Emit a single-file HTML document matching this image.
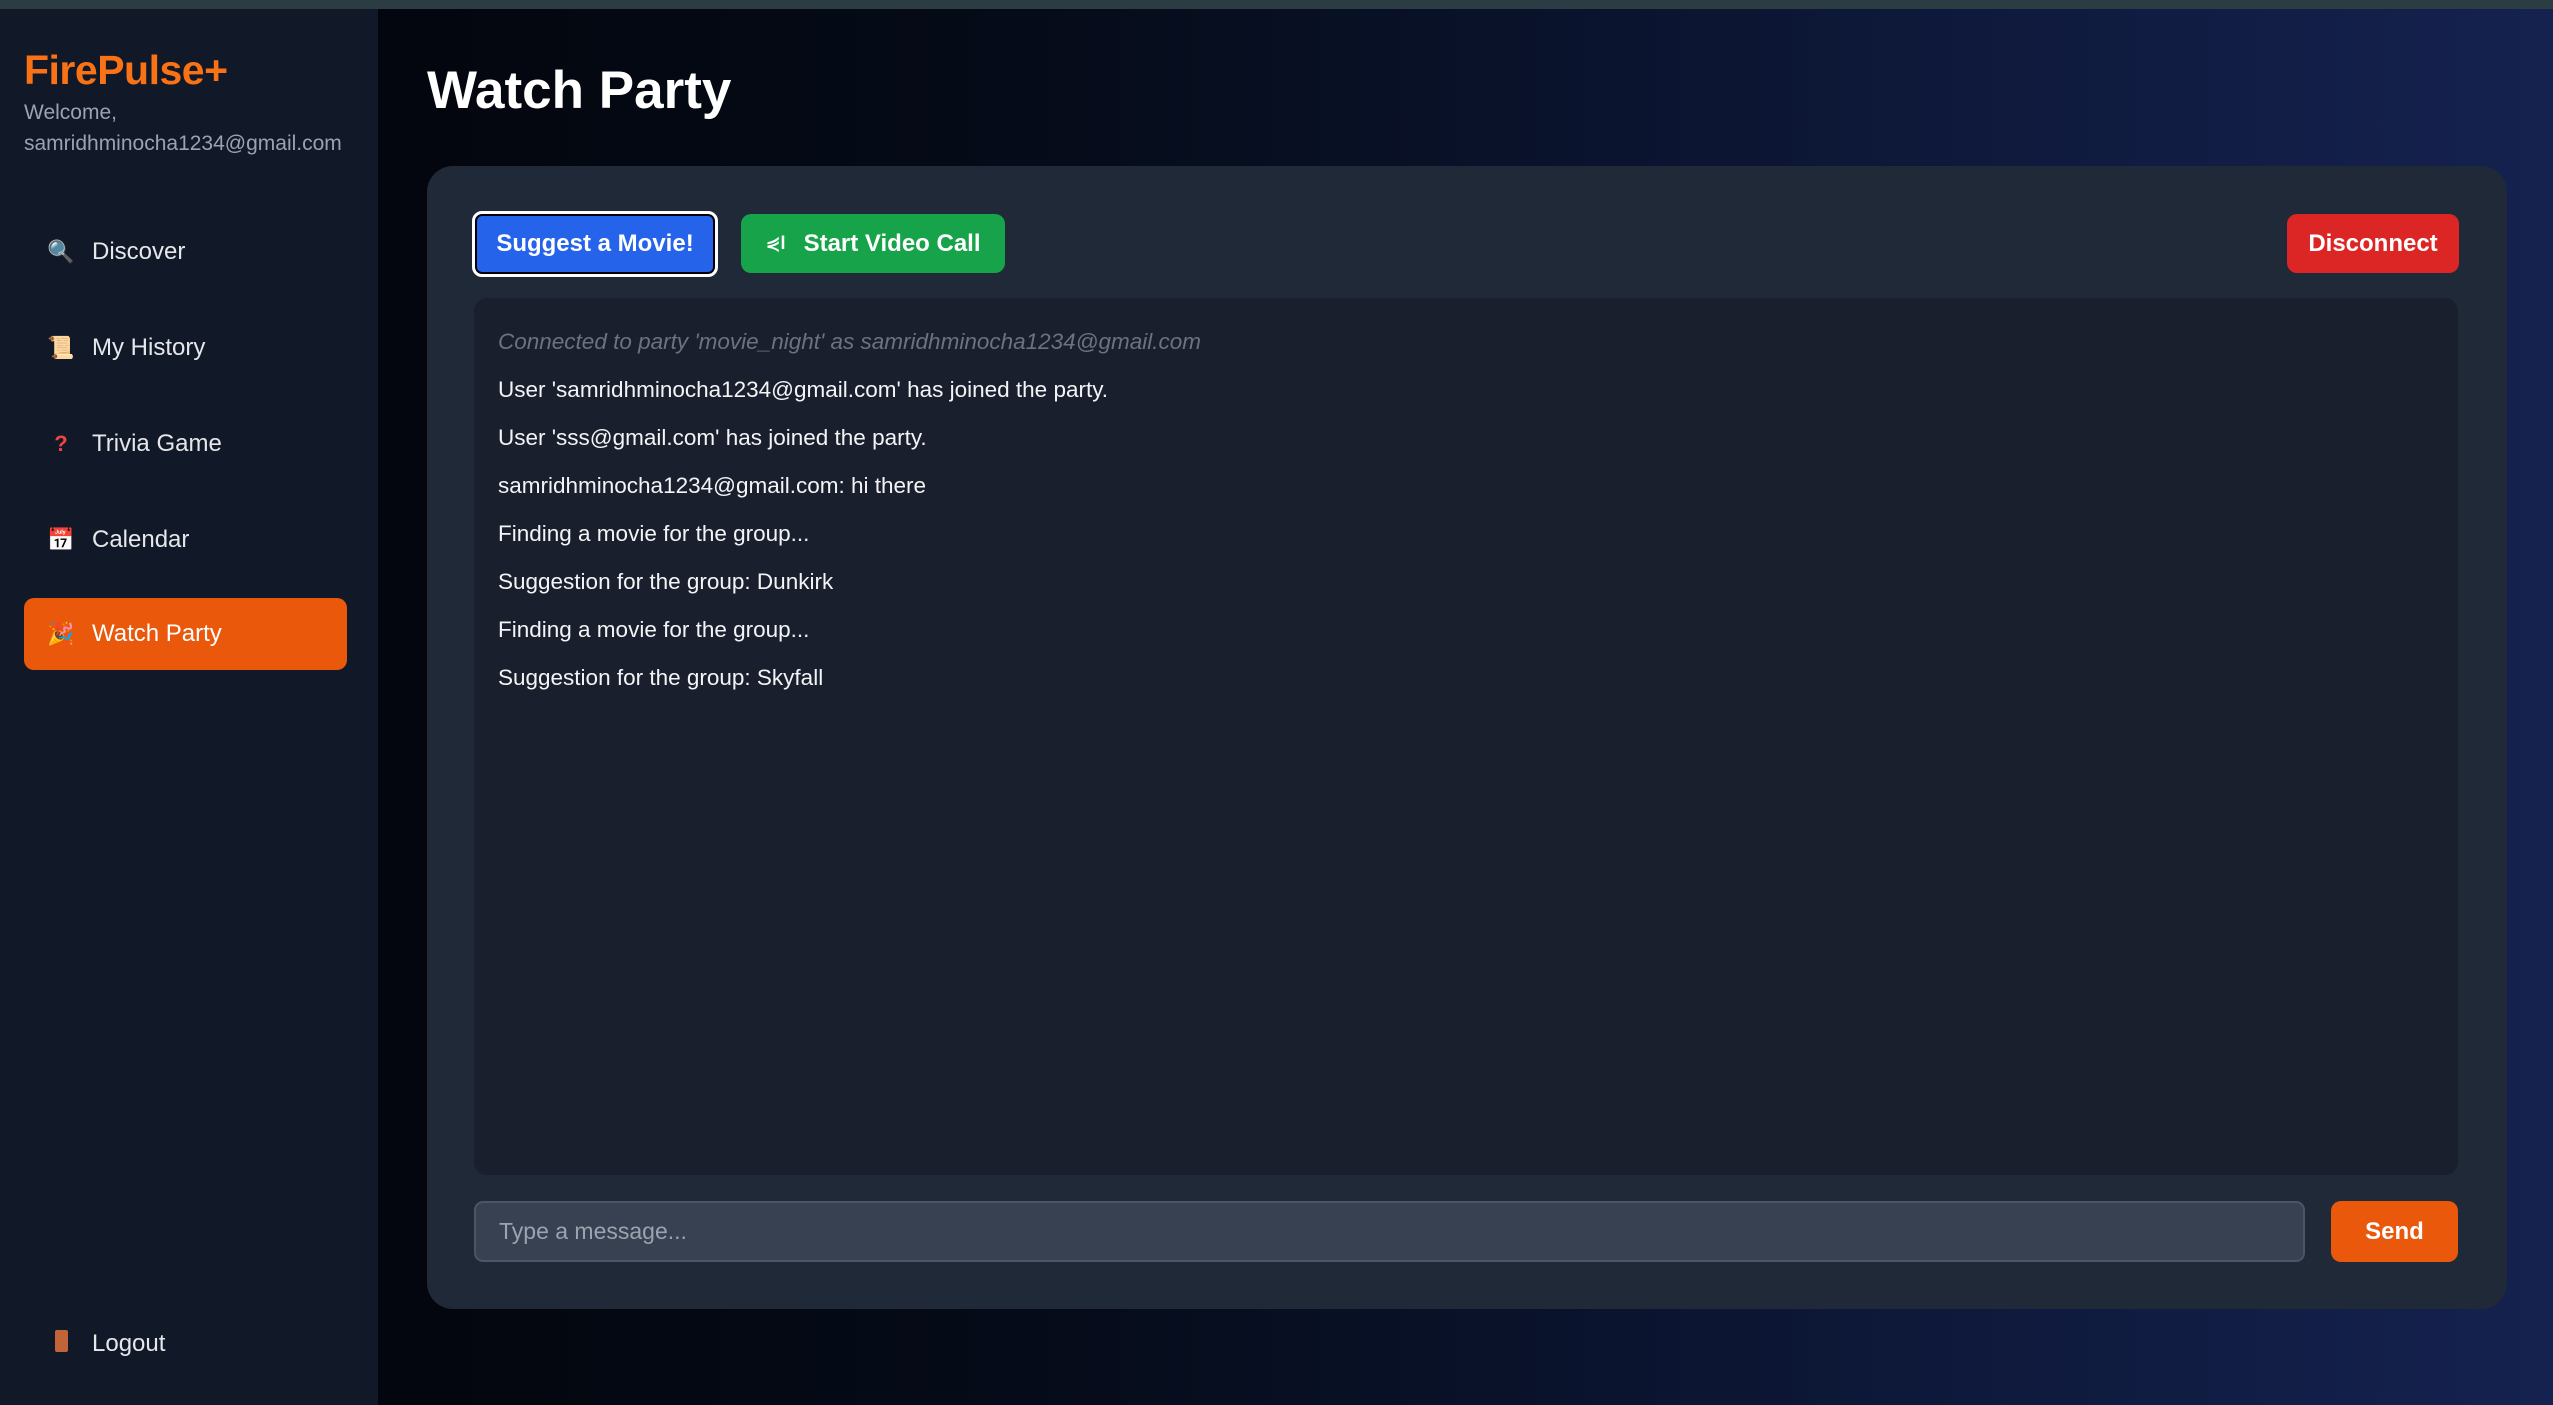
<!DOCTYPE html>
<html><head><meta charset="utf-8"><style>
*{box-sizing:border-box;margin:0;padding:0}
body{width:2553px;height:1405px;overflow:hidden;font-family:"Liberation Sans","DejaVu Sans",sans-serif;background:linear-gradient(90deg,#020308 0%,#050b18 40%,#0f1a3e 80%,#15224f 100%);position:relative;color:#fff}
.top{position:absolute;left:0;top:0;width:2553px;height:9px;background:#2b3c42}
.side{position:absolute;left:0;top:9px;width:378px;height:1396px;background:#111827}
.logo{position:absolute;left:24px;font-size:41px;font-weight:bold;color:#f97316;letter-spacing:-0.5px}
.wel{position:absolute;left:24px;font-size:21px;line-height:31px;color:#9ca3af}
.nav{position:absolute;left:24px;width:323px;height:72px;border-radius:10px;font-size:24px;color:#e5e7eb;display:flex;align-items:center}
.nav .ic{width:30px;margin-left:22px;margin-right:16px;font-size:22px;text-align:center}
.nav.act{background:#ea580c;color:#fff}
h1{position:absolute;left:427px;top:60px;font-size:53px;font-weight:bold;color:#fff}
.panel{position:absolute;left:427px;top:166px;width:2080px;height:1143px;background:#1f2937;border-radius:26px}
.btn{position:absolute;border-radius:10px;font-size:24px;font-weight:bold;color:#fff;display:flex;align-items:center;justify-content:center}
.chat{position:absolute;left:474px;top:298px;width:1984px;height:877px;background:#1a1f2d;border-radius:13px}
.msg{position:absolute;left:498px;font-size:22.5px;color:#f3f4f6}
.inp{position:absolute;left:474px;top:1201px;width:1831px;height:61px;background:#374151;border:2px solid #4b5563;border-radius:9px;font-size:23px;color:#9ca3af;padding-left:23px;line-height:57px}
</style></head><body>
<div class="top"></div>
<div class="side">
<div class="logo" style="top:38px">FirePulse+</div>
<div class="wel" style="top:88px">Welcome,<br>samridhminocha1234@gmail.com</div>
</div>
<div class="nav" style="top:216px"><span class="ic">🔍</span>Discover</div>
<div class="nav" style="top:312px"><span class="ic">📜</span>My History</div>
<div class="nav" style="top:408px"><span class="ic" style="color:#ef4444;font-weight:bold">?</span>Trivia Game</div>
<div class="nav" style="top:504px"><span class="ic">📅</span>Calendar</div>
<div class="nav act" style="top:598px"><span class="ic">🎉</span>Watch Party</div>
<div class="nav" style="top:1308px"><span class="ic"><span style="display:inline-block;width:13px;height:22px;background:#c2643a;border-radius:2px"></span></span>Logout</div>
<h1>Watch Party</h1>
<div class="panel"></div>
<div class="btn" style="left:472px;top:211px;width:246px;height:66px;background:#2563eb;border:3px solid #fff;box-shadow:inset 0 0 0 2px #000">Suggest a Movie!</div>
<div class="btn" style="left:741px;top:214px;width:264px;height:59px;background:#16a34a"><span style="font-size:18px;margin-right:18px">⋞l</span>Start Video Call</div>
<div class="btn" style="left:2287px;top:214px;width:172px;height:59px;background:#dc2626">Disconnect</div>
<div class="chat"></div>
<div class="msg" style="top:329px;font-style:italic;color:#6b7280">Connected to party 'movie_night' as samridhminocha1234@gmail.com</div>
<div class="msg" style="top:377px">User 'samridhminocha1234@gmail.com' has joined the party.</div>
<div class="msg" style="top:425px">User 'sss@gmail.com' has joined the party.</div>
<div class="msg" style="top:473px">samridhminocha1234@gmail.com: hi there</div>
<div class="msg" style="top:521px">Finding a movie for the group...</div>
<div class="msg" style="top:569px">Suggestion for the group: Dunkirk</div>
<div class="msg" style="top:617px">Finding a movie for the group...</div>
<div class="msg" style="top:665px">Suggestion for the group: Skyfall</div>
<div class="inp">Type a message...</div>
<div class="btn" style="left:2331px;top:1201px;width:127px;height:61px;background:#ea580c">Send</div>
</body></html>
